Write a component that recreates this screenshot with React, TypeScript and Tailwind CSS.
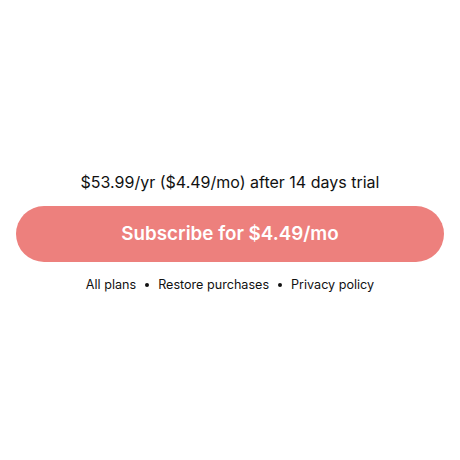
export default function App() {
  return (
    <div className="w-[460px] h-[460px] bg-white flex flex-col items-center justify-center pt-[5px]" style={{ fontFamily: 'Inter, "Noto Sans", sans-serif' }}>
      <div className="text-[16px] leading-[20px] text-[#111]">$53.99/yr ($4.49/mo) after 14 days trial</div>
      <button className="mt-[14px] w-[428px] h-[56px] rounded-[28px] bg-[#ed807d] text-white text-[18.8px] font-semibold">
        Subscribe for $4.49/mo
      </button>
      <div className="mt-[15px] flex items-center gap-[9px] text-[12.6px] leading-[16px] text-[#111]">
        <span>All plans</span>
        <span className="w-[4px] h-[4px] rounded-full bg-[#111]" />
        <span>Restore purchases</span>
        <span className="w-[4px] h-[4px] rounded-full bg-[#111]" />
        <span>Privacy policy</span>
      </div>
    </div>
  );
}
